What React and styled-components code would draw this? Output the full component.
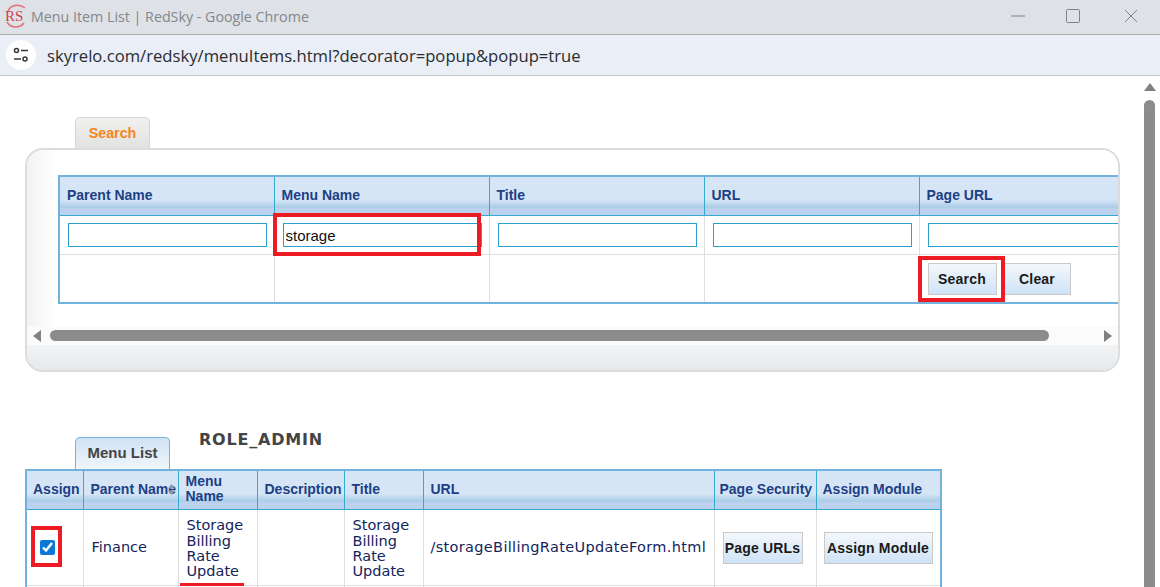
import React from 'react';
import styled, { createGlobalStyle } from 'styled-components';

const GlobalStyle = createGlobalStyle`
    html, body { margin: 0; padding: 0; background: #fff; overflow: hidden; }
    * { box-sizing: border-box; }
`;

const Window = styled.div`
    width: 1160px;
    height: 587px;
    display: flex;
    flex-direction: column;
    overflow: hidden;
    font-family: "Liberation Sans", Arial, sans-serif;
`;

const TitleBar = styled.div`
    height: 35px;
    flex: none;
    display: flex;
    align-items: center;
    background: #dee1e6;
    border-bottom: 1px solid #a9abae;
    padding: 0 0 2px 5px;
`;

const TitleText = styled.span`
    margin-left: 5px;
    font: 14.25px "Open Sans", sans-serif;
    color: #84878b;
    flex: 1;
`;

const WindowButton = styled.button`
    width: ${(p) => p.width || 58}px;
    height: 32px;
    border: 0;
    padding: 0;
    background: none;
    display: flex;
    align-items: center;
    justify-content: center;
`;

const AddressBar = styled.div`
    height: 41px;
    flex: none;
    display: flex;
    align-items: center;
    gap: 11px;
    padding: 0 0 0 6px;
    background: #e9eef7;
    border-bottom: 1px solid #c3c5c8;
`;

const SiteChip = styled.div`
    width: 30px;
    height: 30px;
    border-radius: 50%;
    background: #fff;
    display: flex;
    align-items: center;
    justify-content: center;
`;

const AddressText = styled.span`
    font: 16.65px "Open Sans", sans-serif;
    color: #2a2c30;
`;

const Viewport = styled.div`
    flex: 1;
    min-height: 0;
    display: flex;
`;

const Page = styled.div`
    flex: 1;
    min-width: 0;
    padding: 41px 0 0 25px;
`;

const TabRow = styled.div`
    display: flex;
    align-items: flex-start;
    padding-left: 50px;
    height: ${(p) => p.height}px;
`;

const SearchTab = styled.div`
    width: 75px;
    height: 31px;
    border: 1px solid #d6d6d6;
    border-bottom: 0;
    border-radius: 5px 5px 0 0;
    background: linear-gradient(#f0f0ee, #e2e2e0);
    color: #f7851a;
    font-weight: bold;
    font-size: 14.3px;
    text-align: center;
    line-height: 30px;
`;

const ListTab = styled.div`
    width: 95px;
    height: 32px;
    border: 1px solid #74b3dc;
    border-bottom: 0;
    border-radius: 5px 5px 0 0;
    background: linear-gradient(#cfe2f3, #f0f6fb);
    color: #444;
    font-weight: bold;
    font-size: 15px;
    text-align: center;
    line-height: 30px;
`;

const RoleLabel = styled.div`
    margin: -7px 0 0 29px;
    font: bold 16px "DejaVu Sans", sans-serif;
    letter-spacing: 0.8px;
    color: #444;
`;

const SearchPanel = styled.div`
    width: 1095px;
    height: 224px;
    border: 2px solid #dcdcdc;
    border-radius: 18px;
    background: #fff;
    overflow: hidden;
    display: flex;
    flex-direction: column;
`;

const PanelBody = styled.div`
    height: 176px;
    flex: none;
    padding: 25px 0 0 31px;
    overflow: hidden;
    background: linear-gradient(90deg, #f1f2f2, #fff 30px);
`;

const Grid = styled.table`
    border-collapse: collapse;
    table-layout: fixed;
    border: 2px solid #72b3dd;
    width: ${(p) => p.width}px;
`;

const HeadCell = styled.th`
    height: 39px;
    padding: 0 0 1px ${(p) => p.pad || 7}px;
    text-align: left;
    vertical-align: middle;
    font-size: 14px;
    line-height: 15px;
    font-weight: bold;
    color: #1c3f86;
    border: 1px solid #36a9cf;
    border-top: 0;
    background: linear-gradient(#d5e5f5 0, #d5e5f5 60%, #a9cce6 80%, #bad2ed 81%, #bad2ed 100%);
    position: relative;
`;

const SortMark = styled.svg`
    position: absolute;
    right: 3px;
    top: 13px;
`;

const BodyCell = styled.td`
    height: ${(p) => p.height}px;
    padding: ${(p) => p.top || 0}px 0 0 ${(p) => p.pad || 0}px;
    border: 1px solid #dedede;
    position: relative;
    vertical-align: middle;
    font: 14.5px/15.3px "DejaVu Sans", sans-serif;
    letter-spacing: ${(p) => p.tracking || 0}px;
    color: #14245c;
`;

const TextField = styled.input`
    display: block;
    width: ${(p) => p.width || 199}px;
    height: 24px;
    margin-left: 8px;
    padding: 1px 0 0 2px;
    border: 1px solid #2ba0cf;
    border-radius: 0;
    outline: 0;
    background: #fff;
    font: 15px "Liberation Sans", Arial, sans-serif;
    color: #111;
`;

const ButtonRow = styled.div`
    display: flex;
    gap: 7px;
    margin: 1px 0 0 8px;
`;

const GridButton = styled.button`
    display: block;
    width: ${(p) => p.width}px;
    height: 32px;
    padding: 0;
    border: 1px solid #c9c9c9;
    background: linear-gradient(#f3f7fb, #cfe3f6);
    color: #1a1a1a;
    font: bold 14px "Liberation Sans", Arial, sans-serif;
    letter-spacing: 0.2px;
`;

const RedBox = styled.div`
    position: absolute;
    left: ${(p) => p.left}px;
    top: ${(p) => p.top}px;
    width: ${(p) => p.width}px;
    height: ${(p) => p.height}px;
    border: 4px solid #ed1c24;
    pointer-events: none;
`;

const RedUnderline = styled.div`
    position: absolute;
    left: 1px;
    bottom: -1px;
    width: 64px;
    height: 3px;
    background: #ed1c24;
`;

const HorizontalScroll = styled.div`
    height: 19px;
    flex: none;
    display: flex;
    align-items: center;
    background: #fbfbfb;
    padding-left: 6px;
`;

const ScrollThumb = styled.div`
    width: 999px;
    height: 11px;
    margin-left: 9px;
    border-radius: 6px;
    background: #8c8c8c;
`;

const ScrollFill = styled.div`
    flex: 1;
`;

const ScrollEnd = styled.div`
    flex: none;
    width: 6px;
`;

const PanelFoot = styled.div`
    flex: 1;
    background: linear-gradient(#f2f3f4, #e6e9eb);
`;

const ListSpacer = styled.div`
    height: 65px;
`;

const Check = styled.input`
    display: block;
    width: 15px;
    height: 15px;
    margin: 0 0 0 13px;
    accent-color: #0b78d8;
`;

const VerticalScroll = styled.div`
    width: 15px;
    flex: none;
    margin-right: 3px;
    padding-top: 7px;
    display: flex;
    flex-direction: column;
    align-items: center;
    gap: 9px;
`;

const VerticalThumb = styled.div`
    width: 11px;
    flex: 1;
    border-radius: 6px 6px 0 0;
    background: #8c8c8c;
`;

function Triangle({ dir }) {
    const points = {
        up: '6,0 12,8 0,8',
        left: '8,0 8,12 0,6',
        right: '0,0 8,6 0,12',
    };
    const size = dir === 'up' ? [12, 8] : [8, 12];
    return (
        <svg width={size[0]} height={size[1]} style={{ flex: 'none' }}>
            <polygon points={points[dir]} fill="#808080" />
        </svg>
    );
}

function Logo() {
    return (
        <svg width="21" height="24" viewBox="0 0 21 24">
            <path d="M3 7 C6 0 15 0 20 4 M2 18 C6 25 15 24 19 19" fill="none" stroke="#e3727b" strokeWidth="1.6" />
            <text x="0" y="17" fontFamily="Liberation Serif" fontSize="15" fill="#cf3f4c">RS</text>
        </svg>
    );
}

function TuneIcon() {
    return (
        <svg width="16" height="16" viewBox="0 0 16 16" fill="none" stroke="#35373a" strokeWidth="1.5">
            <circle cx="3.5" cy="3.5" r="2" />
            <path d="M8 3.5h7" />
            <path d="M1 12h7" />
            <circle cx="12" cy="12" r="2" />
        </svg>
    );
}

const searchColumns = ['Parent Name', 'Menu Name', 'Title', 'URL', 'Page URL'];

const listColumns = [
    { label: 'Assign', width: 57, pad: 6 },
    { label: 'Parent Name', width: 95, sort: true },
    { label: 'Menu Name', width: 79 },
    { label: 'Description', width: 87 },
    { label: 'Title', width: 79 },
    { label: 'URL', width: 291 },
    { label: 'Page Security', width: 102, pad: 5 },
    { label: 'Assign Module', width: 125, pad: 6 },
];

function SearchGrid() {
    return (
        <Grid width={1075}>
            <colgroup>
                {searchColumns.map((c) => <col key={c} style={{ width: 215 }} />)}
            </colgroup>
            <thead>
                <tr>
                    {searchColumns.map((c) => <HeadCell key={c}>{c}</HeadCell>)}
                </tr>
            </thead>
            <tbody>
                <tr>
                    <BodyCell height={39}><TextField readOnly value="" /></BodyCell>
                    <BodyCell height={39}>
                        <TextField readOnly value="storage" />
                        <RedBox left={-2} top={-3} width={208} height={43} />
                    </BodyCell>
                    <BodyCell height={39}><TextField readOnly value="" /></BodyCell>
                    <BodyCell height={39}><TextField readOnly value="" /></BodyCell>
                    <BodyCell height={39}><TextField readOnly value="" width={205} /></BodyCell>
                </tr>
                <tr>
                    <BodyCell height={49} />
                    <BodyCell height={49} />
                    <BodyCell height={49} />
                    <BodyCell height={49} />
                    <BodyCell height={49}>
                        <ButtonRow>
                            <GridButton width={69}>Search</GridButton>
                            <GridButton width={67}>Clear</GridButton>
                        </ButtonRow>
                        <RedBox left={-2} top={1} width={87} height={46} />
                    </BodyCell>
                </tr>
            </tbody>
        </Grid>
    );
}

function MenuGrid() {
    return (
        <Grid width={915}>
            <colgroup>
                {listColumns.map((c) => <col key={c.label} style={{ width: c.width }} />)}
            </colgroup>
            <thead>
                <tr>
                    {listColumns.map((c) => (
                        <HeadCell key={c.label} pad={c.pad}>
                            {c.label}
                            {c.sort && (
                                <SortMark width="7" height="11" viewBox="0 0 7 11">
                                    <polygon points="3.5,0 7,4.5 0,4.5" fill="#8a98a5" />
                                    <polygon points="0,6.5 7,6.5 3.5,11" fill="#8a98a5" />
                                </SortMark>
                            )}
                        </HeadCell>
                    ))}
                </tr>
            </thead>
            <tbody>
                <tr>
                    <BodyCell height={76} top={0}>
                        <Check type="checkbox" readOnly checked />
                        <RedBox left={4} top={16} width={31} height={41} />
                    </BodyCell>
                    <BodyCell height={76} pad={8} top={2}>Finance</BodyCell>
                    <BodyCell height={76} pad={8} top={4}>
                        Storage Billing Rate Update
                        <RedUnderline />
                    </BodyCell>
                    <BodyCell height={76} />
                    <BodyCell height={76} pad={8} top={4}>Storage Billing Rate Update</BodyCell>
                    <BodyCell height={76} pad={7} top={2} tracking={0.33}>/storageBillingRateUpdateForm.html</BodyCell>
                    <BodyCell height={76} pad={8} top={2}><GridButton width={80}>Page URLs</GridButton></BodyCell>
                    <BodyCell height={76} pad={7} top={2}><GridButton width={109}>Assign Module</GridButton></BodyCell>
                </tr>
                <tr>
                    {listColumns.map((c) => <BodyCell key={c.label} height={40} />)}
                </tr>
            </tbody>
        </Grid>
    );
}

export default function App() {
    return (
        <Window>
            <GlobalStyle />
            <TitleBar>
                <Logo />
                <TitleText>Menu Item List | RedSky - Google Chrome</TitleText>
                <WindowButton width={53}>
                    <svg width="14" height="2"><path d="M0 1h14" stroke="#808488" /></svg>
                </WindowButton>
                <WindowButton>
                    <svg width="14" height="14"><rect x="0.5" y="0.5" width="13" height="13" rx="1" fill="none" stroke="#808488" /></svg>
                </WindowButton>
                <WindowButton>
                    <svg width="14" height="14"><path d="M1 1l12 12M13 1L1 13" stroke="#808488" /></svg>
                </WindowButton>
            </TitleBar>
            <AddressBar>
                <SiteChip><TuneIcon /></SiteChip>
                <AddressText>skyrelo.com/redsky/menuItems.html?decorator=popup&amp;popup=true</AddressText>
            </AddressBar>
            <Viewport>
                <Page>
                    <TabRow height={31}>
                        <SearchTab>Search</SearchTab>
                    </TabRow>
                    <SearchPanel>
                        <PanelBody><SearchGrid /></PanelBody>
                        <HorizontalScroll>
                            <Triangle dir="left" />
                            <ScrollThumb />
                            <ScrollFill />
                            <Triangle dir="right" />
                            <ScrollEnd />
                        </HorizontalScroll>
                        <PanelFoot />
                    </SearchPanel>
                    <ListSpacer />
                    <TabRow height={32}>
                        <ListTab>Menu List</ListTab>
                        <RoleLabel>ROLE_ADMIN</RoleLabel>
                    </TabRow>
                    <MenuGrid />
                </Page>
                <VerticalScroll>
                    <Triangle dir="up" />
                    <VerticalThumb />
                </VerticalScroll>
            </Viewport>
        </Window>
    );
}
